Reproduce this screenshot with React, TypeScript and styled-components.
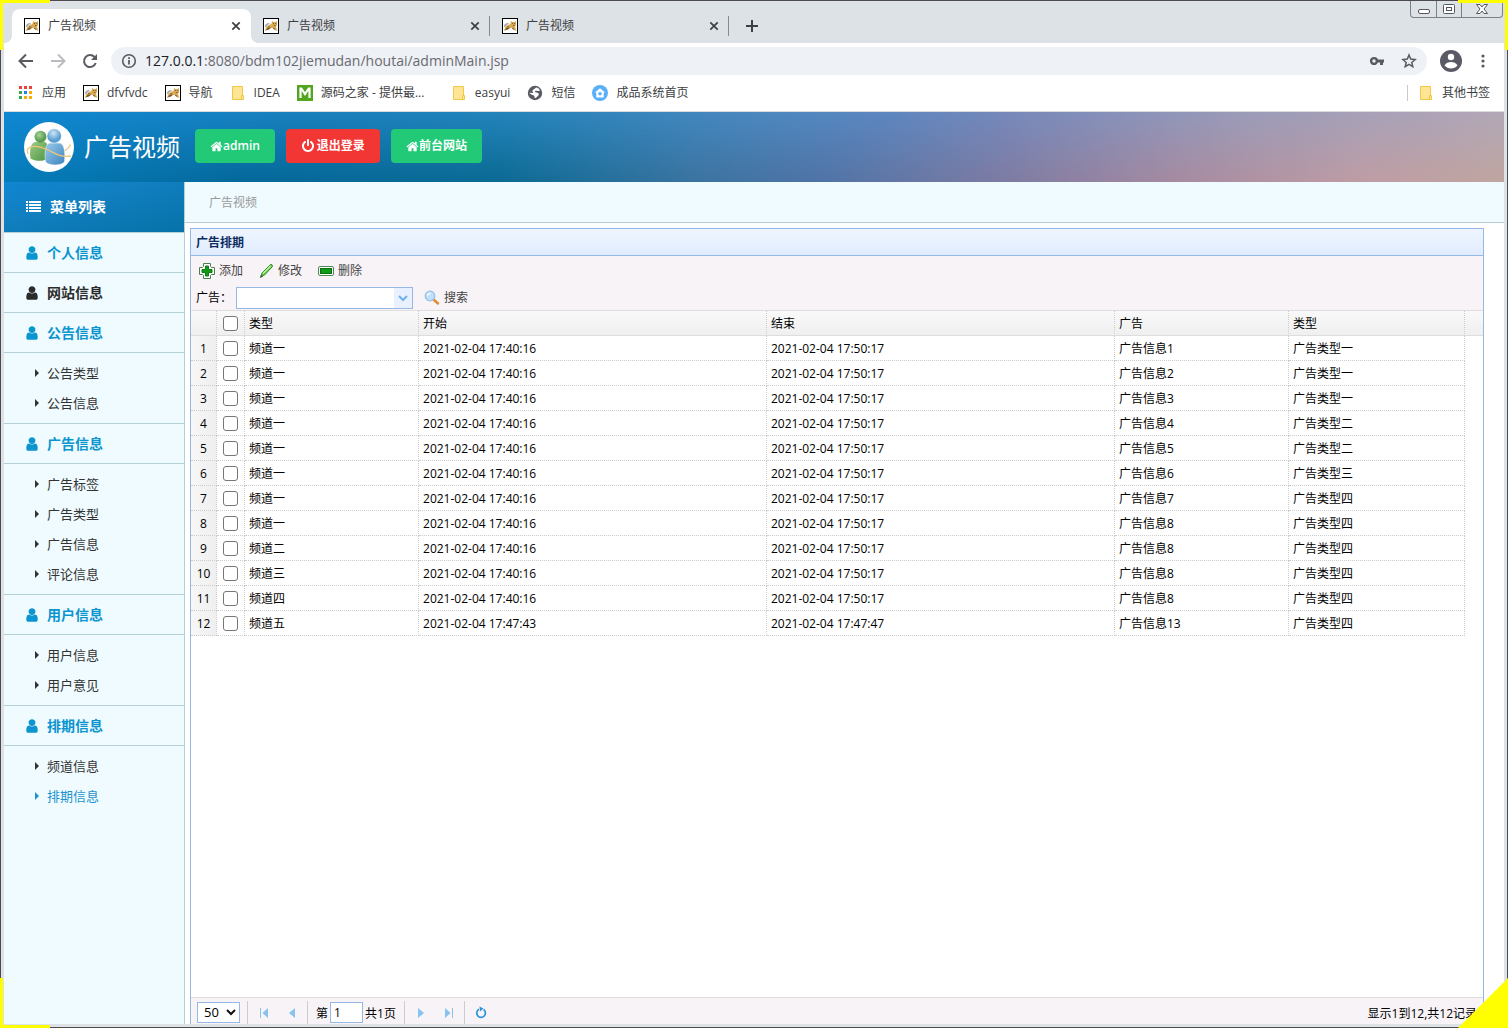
import React from "react";
import styled, { createGlobalStyle } from "styled-components";

const BORDER_BLUE = "#95b8e7";
const LINE = "#b2d0d6";
const SANS = `"Open Sans", "Noto Sans", "Noto Sans CJK SC", sans-serif`;

const GlobalStyle = createGlobalStyle`
  *, *::before, *::after { box-sizing: border-box; }
  body { margin: 0; font: 12px/20px ${SANS}; color: #000; background: #dee1e6; }
  button, input, select { font: inherit; color: inherit; margin: 0; padding: 0; }
  button { border: 0; background: none; cursor: pointer; }
  a { color: inherit; text-decoration: none; }
  ul { list-style: none; margin: 0; padding: 0; }
  svg { display: block; flex: none; }
`;

/* ---------- window ---------- */
const Frame = styled.div`position: relative;`;
const Window = styled.div`
  display: flex;
  flex-direction: column;
  height: 100vh;
  min-height: 860px;
  overflow: hidden;
  border: 1px solid #4d4b4d;
  background: #dde2e6;
`;
const WindowBody = styled.div`
  flex: 1;
  min-height: 0;
  display: flex;
  flex-direction: column;
  margin: 0 3px 3px;
  background: #fff;
`;
const CornerMark = styled.span<{ $v: "top" | "bottom"; $h: "left" | "right" }>`
  position: absolute;
  ${(p) => p.$v}: 0;
  ${(p) => p.$h}: 0;
  width: 50px;
  height: 50px;
  border: 0 solid #ff0;
  border-${(p) => p.$v}-width: 3px;
  border-${(p) => p.$h}-width: 3px;
  pointer-events: none;
`;
const CornerFold = styled.span`
  position: absolute;
  right: 0;
  bottom: 0;
  width: 50px;
  height: 50px;
  background: #ff0;
  clip-path: polygon(100% 0, 100% 100%, 0 100%);
  pointer-events: none;
`;

/* ---------- browser chrome ---------- */
const TabStrip = styled.div`
  display: flex;
  height: 42px;
  flex: none;
  padding-left: 8px;
  background: #dde2e6;
`;
const Tab = styled.div<{ $active?: boolean; $line?: boolean }>`
  position: relative;
  display: flex;
  align-items: center;
  gap: 8px;
  width: 239px;
  margin-top: 8px;
  padding: 0 7px 0 12px;
  border-radius: 8px 8px 0 0;
  color: #3c4043;
  background: ${(p) => (p.$active ? "#fff" : "transparent")};
  &::before, &::after {
    content: "";
    display: ${(p) => (p.$active ? "block" : "none")};
    position: absolute;
    bottom: 0;
    width: 8px;
    height: 8px;
  }
  &::before { left: -8px; background: radial-gradient(circle at 0 0, transparent 8px, #fff 8px); }
  &::after {
    right: -8px;
    background: radial-gradient(circle at 100% 0, transparent 8px, #fff 8px);
    ${(p) => p.$line && "display: block; right: 0; bottom: 7px; width: 1px; height: 20px; background: #87898c;"}
  }
`;
const TabTitle = styled.span`flex: 1; line-height: 22px;`;
const IconButton = styled.button<{ $w?: number }>`
  display: flex;
  align-items: center;
  justify-content: center;
  width: ${(p) => p.$w ?? 16}px;
  height: 16px;
`;
const NewTab = styled(IconButton)`margin: 17px 0 0 15px;`;
const WindowButtons = styled.div`
  display: flex;
  height: 17px;
  margin: 0 1px 0 auto;
  border: 1px solid #7b7f86;
  border-top: 0;
  border-radius: 0 0 4px 4px;
  button + button { border-left: 1px solid #7b7f86; }
`;
const AddressRow = styled.div`
  display: flex;
  align-items: center;
  flex: none;
  height: 36px;
  padding: 0 13px 0 14px;
  gap: 13px;
`;
const NavButtons = styled.div`display: flex; gap: 16px;`;
const Omnibox = styled.div`
  flex: 1;
  display: flex;
  align-items: center;
  gap: 8px;
  height: 28px;
  padding: 0 10px;
  border-radius: 14px;
  background: #eef1f6;
`;
const Url = styled.div`
  flex: 1;
  font-size: 14px;
  color: #6a6a70;
  b { font-weight: 400; color: #202124; }
`;
const OmniIcons = styled.div`display: flex; gap: 16px;`;
const Bookmarks = styled.nav`
  display: flex;
  align-items: center;
  flex: none;
  gap: 17px;
  height: 33px;
  padding: 0 14px 4px;
  border-bottom: 1px solid #dadce0;
  line-height: 22px;
  color: #3c4043;
`;
const Bookmark = styled.a<{ $last?: boolean; $min?: number }>`
  display: flex;
  align-items: center;
  gap: 8px;
  min-width: ${(p) => p.$min ?? 0}px;
  white-space: nowrap;
  ${(p) => p.$last && "margin-left: auto; padding-left: 10px; border-left: 1px solid #c8cacd; height: 16px;"}
`;

/* ---------- site ---------- */
const Header = styled.header`
  position: relative;
  isolation: isolate;
  display: flex;
  align-items: center;
  flex: none;
  height: 70px;
  padding-left: 20px;
  background: linear-gradient(to right, #0f88d4 0%, #1a80bd 20%, #2384bb 33%, #4b88bf 50%, #5b87c0 58%, #7789bb 67%, #9a9bb9 82%, #b0a5b8 97%, #b2a8b6 100%);
  &::before {
    content: "";
    position: absolute;
    inset: 0;
    z-index: -1;
    background: linear-gradient(to right, #057cb8 0%, #04689a 16%, #0b6a93 33%, #3b73a0 46%, #5273a6 55%, #7f7ba2 67%, #a68aa0 78%, #bf9da4 91%, #bfa59f 100%);
    mask-image: linear-gradient(to bottom, transparent, #000);
  }
`;
const SiteTitle = styled.h1`
  margin: 0 15px 0 10px;
  font-size: 24px;
  line-height: 36px;
  font-weight: 400;
  color: #fff;
`;
const HeaderActions = styled.div`
  display: flex;
  gap: 11px;
  padding-bottom: 2px;
`;
const HeaderButton = styled.button<{ $red?: boolean }>`
  display: flex;
  align-items: center;
  gap: ${(p) => (p.$red ? 2 : 0)}px;
  height: 34px;
  padding: 0 15px;
  border-radius: 4px;
  font-weight: 600;
  color: #fff;
  background: ${(p) => (p.$red ? "#f13633" : "#22ca77")};
`;
const Columns = styled.div`flex: 1; min-height: 0; display: flex;`;
const Sidebar = styled.aside`
  flex: none;
  width: 181px;
  border-right: 1px solid ${LINE};
  background: #effbff;
`;
const MenuTitle = styled.h2`
  display: flex;
  align-items: center;
  gap: 9px;
  height: 51px;
  margin: 0;
  padding-left: 22px;
  border-bottom: 1px solid ${LINE};
  font-size: 14px;
  color: #fff;
  background: linear-gradient(165deg, #0f86d2 0%, #117fc0 40%, #0672a8 100%);
`;
const MenuItem = styled.a<{ $dark?: boolean }>`
  display: flex;
  align-items: center;
  gap: 7px;
  height: 40px;
  padding-left: 20px;
  border-bottom: 1px solid ${LINE};
  font-size: 14px;
  font-weight: 700;
  color: ${(p) => (p.$dark ? "#2b2b2b" : "#0b95cf")};
`;
const SubMenu = styled.ul`
  padding: 5px 0;
  border-bottom: 1px solid ${LINE};
  &.last { border-bottom: 0; }
`;
const SubItem = styled.a<{ $on?: boolean }>`
  display: flex;
  align-items: center;
  gap: 8px;
  height: 30px;
  padding-left: 30px;
  font-size: 13px;
  color: ${(p) => (p.$on ? "#1f93cd" : "#333")};
`;
const Main = styled.main`flex: 1; min-width: 0; display: flex; flex-direction: column;`;
const Crumb = styled.div`
  flex: none;
  height: 41px;
  padding-left: 24px;
  border-bottom: 1px solid ${LINE};
  line-height: 42px;
  color: #999;
  background: #effbff;
`;

/* ---------- grid panel ---------- */
const Panel = styled.section`
  flex: 1;
  min-height: 0;
  display: flex;
  flex-direction: column;
  margin: 5px 20px 0 5px;
  border: 1px solid ${BORDER_BLUE};
  border-bottom: 0;
`;
const PanelTitle = styled.h3`
  height: 27px;
  margin: 0;
  padding-left: 5px;
  border-bottom: 1px solid ${BORDER_BLUE};
  font-size: 12px;
  line-height: 28px;
  color: #0e2d5f;
  background: linear-gradient(#eff5ff, #e0ecff);
`;
const Tools = styled.div`
  height: 55px;
  padding: 1px 5px 0;
  border-bottom: 1px solid #ddd;
  background: #f8f3f7;
`;
const ToolRow = styled.div<{ $gap: number }>`
  display: flex;
  align-items: center;
  gap: ${(p) => p.$gap}px;
  height: 27px;
`;
const ToolButton = styled.button`
  display: flex;
  align-items: center;
  gap: 4px;
  height: 24px;
  padding: 0 3px;
  color: #444;
`;
const Combo = styled.span`
  position: relative;
  width: 177px;
  height: 22px;
  margin-right: 4px;
  border: 1px solid ${BORDER_BLUE};
  background: #fff;
  select {
    width: 100%;
    height: 100%;
    padding: 0 22px 0 4px;
    border: 0;
    outline: 0;
    appearance: none;
    background: linear-gradient(#e9f0ff, #e9f0ff) right / 18px 100% no-repeat;
  }
  svg { position: absolute; right: 4px; top: 7px; pointer-events: none; }
`;
const Scroll = styled.div`flex: 1; min-height: 0; overflow: hidden;`;
const Grid = styled.table`
  width: 100%;
  table-layout: fixed;
  border-collapse: separate;
  border-spacing: 0;
  th, td {
    height: 25px;
    padding: 2px 4px 0;
    border-right: 1px dotted #ccc;
    border-bottom: 1px dotted #ccc;
    font-weight: 400;
    line-height: 22px;
    text-align: left;
    white-space: nowrap;
    overflow: hidden;
  }
  thead tr { background: linear-gradient(#f9f9f9, #efefef); }
  thead th { border-bottom: 1px solid #ddd; }
  tbody th {
    padding: 2px 0 0;
    text-align: center;
    background: linear-gradient(to right, #f7f7f7, #efefef);
  }
  th:last-child, td:last-child { border-right: 0; padding: 0; }
  td:last-child { border-bottom: 0; }
`;
const Check = styled.input`
  display: block;
  appearance: none;
  width: 15px;
  height: 15px;
  margin: 0 auto;
  border: 1px solid #767676;
  border-radius: 3px;
  background: #fff;
  &:checked { background: #1a73e8; }
`;
const CheckTh = styled.th`&&& { padding: 0; }`;
const CheckTd = styled.td`&&& { padding: 0; }`;
const Pager = styled.footer`
  flex: none;
  display: flex;
  height: 27px;
  padding: 4px 6px 0;
  border-top: 1px solid #ddd;
  line-height: 24px;
  background: #f8f3f7;
`;
const PageSize = styled.span`
  position: relative;
  width: 43px;
  height: 21px;
  margin-right: 6px;
  select {
    display: block;
    width: 100%;
    height: 100%;
    padding-left: 6px;
    border: 1px solid ${BORDER_BLUE};
    appearance: none;
    font-size: 13px;
    line-height: 19px;
    background: #fff;
  }
  svg { position: absolute; right: 4px; top: 7px; pointer-events: none; }
`;
const Sep = styled.span`
  width: 1px;
  height: 23px;
  margin: -1px 2px 0 1px;
  background: #ccc;
`;
const PageButton = styled(IconButton)`height: 22px;`;
const PageField = styled.label`
  display: flex;
  gap: 2px;
  padding: 0 7px 0 6px;
  input {
    width: 33px;
    height: 21px;
    padding: 0 3px;
    border: 1px solid ${BORDER_BLUE};
    background: #fff;
  }
`;
const PageInfo = styled.span`margin-left: auto;`;

/* ---------- icons ---------- */
const FA = {
  user: "M1536 1399q0 109-62.5 187t-150.5 78h-854q-88 0-150.5-78t-62.5-187q0-85 8.5-160.5t31.5-152 58.5-131 94-89 134.5-34.5q131 128 313 128t313-128q76 0 134.5 34.5t94 89 58.5 131 31.5 152 8.5 160.5zm-256-887q0 159-112.5 271.5t-271.5 112.5-271.5-112.5-112.5-271.5 112.5-271.5 271.5-112.5 271.5 112.5 112.5 271.5z",
  home: "M1472 992v480q0 26-19 45t-45 19h-384v-384h-256v384h-384q-26 0-45-19t-19-45v-480q0-1 .5-3t.5-3l575-474 575 474q1 2 1 6zm223-69l-62 74q-8 9-21 11h-3q-13 0-21-7l-692-577-692 577q-12 8-24 7-13-2-21-11l-62-74q-8-10-7-23.5t11-21.5l719-599q32-26 76-26t76 26l244 204v-195q0-14 9-23t23-9h192q14 0 23 9t9 23v408l219 182q10 8 11 21.5t-7 23.5z",
  power: "M1664 896q0 156-61 298t-164 245-245 164-298 61-298-61-245-164-164-245-61-298q0-182 80.5-343t226.5-270q43-32 95.5-25t83.5 50q32 42 24.5 94.5t-49.5 84.5q-98 74-151.5 181t-53.5 228q0 104 40.5 198.5t109.5 163.5 163.5 109.5 198.5 40.5 198.5-40.5 163.5-109.5 109.5-163.5 40.5-198.5q0-121-53.5-228t-151.5-181q-42-32-49.5-84.5t24.5-94.5q31-43 84-50t95 25q146 109 226.5 270t80.5 343zm-640-768v640q0 52-38 90t-90 38-90-38-38-90v-640q0-52 38-90t90-38 90 38 38 90z",
};
const Glyph = ({ name, size }: { name: keyof typeof FA; size: number }) => (
  <svg width={size} height={size} viewBox="0 0 1792 1792" fill="currentColor"><path d={FA[name]} /></svg>
);
const TomcatIcon = () => (
  <svg width="16" height="16" viewBox="0 0 16 16">
    <rect x=".5" y=".5" width="15" height="15" fill="#fff" stroke="#000" />
    <path d="M2 13l1-3.500 3-2.500 2.500-1 .5-3 1.500 1h2l1.500-1v4l-1 2 1.500 4-2-1-2.500-2.500-3 1-2 .5z" fill="#d9a952" />
    <path d="M1.800 9l.7-2.500 2.500-1.500 2.500.8-2.500 1-1.800 2.200z" fill="#a5a5a5" />
    <path d="M2.500 12.500l2.500-3 2.500.5-1.500 1.500zM9.500 9.500l1.800.5 1.700 2.500-2.500-1.500z" fill="#7a5726" />
    <path d="M5 8.500l2.500.8M10 5.500h1M12.200 5.500h1M11 7.500h1.500" stroke="#7a5726" strokeWidth=".9" />
  </svg>
);
const FolderIcon = () => (
  <svg width="16" height="16" viewBox="0 0 16 16">
    <path d="M2.500 1.500h10v13h-10z" fill="#ffe594" stroke="#efc84a" />
    <path d="M11.500 10.500h2v4h-2z" fill="#ffe594" stroke="#efc84a" />
  </svg>
);
const AppsIcon = () => {
  const c = ["#ea4335", "#ea4335", "#ea4335", "#34a853", "#1a86ee", "#fbac04", "#34a853", "#fbac04", "#fbac04"];
  return (
    <svg width="16" height="16" viewBox="0 0 16 16">
      {c.map((f, i) => <rect key={i} x={1 + (i % 3) * 5} y={1 + Math.floor(i / 3) * 5} width="3" height="3" fill={f} />)}
    </svg>
  );
};
const MIcon = () => (
  <svg width="16" height="16" viewBox="0 0 16 16">
    <rect width="16" height="16" fill="#53a51f" />
    <path d="M3.500 13V3.500h.8L8 9l3.700-5.500h.8V13" fill="none" stroke="#fff" strokeWidth="2.200" />
  </svg>
);
const GlobeIcon = () => (
  <svg width="16" height="16" viewBox="0 0 16 16">
    <circle cx="8" cy="8" r="7.200" fill="#5a5b62" />
    <path d="M9 2.600c1.800.2 3.200 1.200 4 2.700-1 .9-2.300.6-3.300.4-1.200-.2-2 .3-1.700 1 .4.800 2.200.6 3.200 1.300 1 .9.600 2.400-.6 3.300-.8.6-1.300 1.400-2.600 2 -.6-.8-.2-1.700-.8-2.400C6.400 10 4.800 10.300 4 9.300L2.400 8c1.500-.4 2.800.2 3.900.1C6 7 5 6.800 5.500 5.600 6 4.500 7.800 4.300 9 2.600z" fill="#fff" />
  </svg>
);
const HouseBadge = () => (
  <svg width="16" height="16" viewBox="0 0 16 16">
    <circle cx="8" cy="8" r="8" fill="#5ab0f8" />
    <path d="M8 3.200l5 4.300h-1.300v5H4.300v-5H3z" fill="#fff" />
    <circle cx="8" cy="8.800" r="1.800" fill="#5ab0f8" />
  </svg>
);
const CloseIcon = () => (
  <svg width="16" height="16" viewBox="0 0 16 16" stroke="#3c4043" strokeWidth="1.700"><path d="M4.300 4.300l7.400 7.400M11.700 4.300l-7.400 7.400" /></svg>
);
const PlusIcon = () => (
  <svg width="16" height="16" viewBox="0 0 16 16" stroke="#3c4043" strokeWidth="2"><path d="M8 2v12M2 8h12" /></svg>
);
const ArrowIcon = ({ flip, color }: { flip?: boolean; color: string }) => (
  <svg width="16" height="16" viewBox="0 0 16 16" fill="none" stroke={color} strokeWidth="2">
    <path d={flip ? "M1 8h13M8 1.500L14.500 8 8 14.500" : "M15 8H2M8 1.500L1.500 8 8 14.500"} />
  </svg>
);
const ReloadIcon = () => (
  <svg width="16" height="16" viewBox="0 0 16 16">
    <path d="M13.700 10A6 6 0 1 1 12.500 4" fill="none" stroke="#5a5a62" strokeWidth="2" />
    <path d="M15 1v6H9z" fill="#5a5a62" />
  </svg>
);
const InfoIcon = () => (
  <svg width="16" height="16" viewBox="0 0 16 16" fill="none" stroke="#5a5a62">
    <circle cx="8" cy="8" r="6.300" strokeWidth="1.600" /><path d="M8 7v4.500M8 4.200v1.800" strokeWidth="1.800" />
  </svg>
);
const KeyIcon = () => (
  <svg width="16" height="16" viewBox="0 0 16 16">
    <circle cx="5" cy="8" r="2.900" fill="none" stroke="#5a5a62" strokeWidth="2.400" />
    <path d="M8 6.500h7v3h-1V12h-3V9.500H8z" fill="#5a5a62" />
  </svg>
);
const StarIcon = () => (
  <svg width="16" height="16" viewBox="0 0 16 16">
    <path d="M8 2l1.700 4.100 4.400.4-3.300 2.900 1 4.300L8 11.400l-3.800 2.300 1-4.300L1.900 6.500l4.400-.4z" fill="none" stroke="#5a5a62" strokeWidth="1.500" />
  </svg>
);
const PersonIcon = () => (
  <svg width="22" height="22" viewBox="0 0 22 22">
    <circle cx="11" cy="11" r="11" fill="#5a5a66" />
    <circle cx="11" cy="7" r="3.200" fill="#fff" />
    <path d="M4.500 15.500c1-2.500 4-3.500 6.500-3.500s5.500 1 6.500 3.500c-1.500 2-4 3-6.500 3s-5-1-6.500-3z" fill="#fff" />
  </svg>
);
const DotsIcon = () => (
  <svg width="16" height="16" viewBox="0 0 16 16" fill="#5a5a62">
    <circle cx="8" cy="3" r="1.600" /><circle cx="8" cy="8" r="1.600" /><circle cx="8" cy="13" r="1.600" />
  </svg>
);
const MinIcon = () => (
  <svg width="14" height="14" viewBox="0 0 14 14"><rect x="1.500" y="7.500" width="11" height="4" rx="1.500" fill="#fff" stroke="#54565c" /></svg>
);
const MaxIcon = () => (
  <svg width="14" height="14" viewBox="0 0 14 14" fill="#fff" stroke="#54565c">
    <rect x="1.500" y="2.500" width="11" height="9" rx="1" /><rect x="4.500" y="5.500" width="5" height="3" />
  </svg>
);
const ShutIcon = () => (
  <svg width="14" height="14" viewBox="0 0 14 14" fill="#fff" stroke="#54565c">
    <path d="M1.500 2.500h3.500l2 2.500 2-2.500h3.500L9 7l3.500 4.500H9L7 9l-2 2.500H1.500L5 7z" />
  </svg>
);
const UsersLogo = () => (
  <svg width="50" height="50" viewBox="0 0 50 50" role="img" aria-label="logo">
    <defs>
      <radialGradient id="gh" cx=".4" cy=".35"><stop offset="0" stopColor="#a9d39a" /><stop offset="1" stopColor="#5b9d50" /></radialGradient>
      <linearGradient id="gb" x1="0" x2="1" y2="1"><stop offset="0" stopColor="#9ccb88" /><stop offset="1" stopColor="#4b9440" /></linearGradient>
      <radialGradient id="bh" cx=".45" cy=".3"><stop offset="0" stopColor="#cfe6f7" /><stop offset="1" stopColor="#5c9fd2" /></radialGradient>
      <linearGradient id="bb" x1="0" x2="1" y2="1"><stop offset="0" stopColor="#9ccaeb" /><stop offset="1" stopColor="#3c84c0" /></linearGradient>
    </defs>
    <circle cx="25" cy="25" r="25" fill="#fff" />
    <path d="M6.500 36.500C5 27 7 20 12 20h8c4 0 5 6 4 17-5 2.500-13 2.500-17.500-.5z" fill="url(#gb)" />
    <circle cx="16.500" cy="14.800" r="6" fill="url(#gh)" />
    <path d="M21.500 40C20 29 22 21 26 21h9c5 0 6.500 8 5.500 19-4 4-15 4-19 0z" fill="url(#bb)" stroke="#fff" strokeWidth=".5" />
    <circle cx="30.200" cy="14" r="7.200" fill="url(#bh)" stroke="#fff" strokeWidth=".4" />
    <path d="M4 32C0 23 13 23 22 27c9 4 14 9 25 7M41 28.500c3-1.500 4.500-4 5.500-6" fill="none" stroke="#f2c572" strokeWidth="1.300" />
  </svg>
);
const ListIcon = () => (
  <svg width="15" height="12" viewBox="0 0 15 12" fill="#fff">
    {[0, 3, 6, 9].map((y) => <path key={y} d={`M0 ${y}h2v2H0zM3 ${y}h12v2H3z`} />)}
  </svg>
);
const Caret = () => <svg width="5" height="8" viewBox="0 0 5 8" fill="currentColor"><path d="M1 0l4 4-4 4z" /></svg>;
const AddIcon = () => (
  <svg width="16" height="16" viewBox="0 0 16 16">
    <path d="M4.500 .5h7v3l1 1h3v7h-3l-1 1v3h-7v-3l-1-1h-3v-7h3l1-1z" fill="#fff" stroke="#4a7f52" />
    <path d="M6.500 3h3v3.500H13v3H9.500V13h-3V9.500H3v-3h3.500z" fill="#119a16" stroke="#0b7a12" />
  </svg>
);
const PencilIcon = () => (
  <svg width="15" height="16" viewBox="0 0 15 16">
    <path d="M2 13.500l1-3.500L11.500 1.500q2-.5 2 2L5.500 12z" fill="#62c93c" stroke="#2c8a25" />
    <path d="M4 10.500L11.800 2.800" stroke="#c9f5b5" strokeWidth="1.200" />
    <path d="M.8 15l1.200-3 2 1.800z" fill="#374a34" />
  </svg>
);
const RemoveIcon = () => (
  <svg width="16" height="16" viewBox="0 0 16 16">
    <rect x=".5" y="3.500" width="15" height="9" rx="1.500" fill="#fff" stroke="#4c8a55" />
    <rect x="2.500" y="5.500" width="11" height="5" fill="#119a16" stroke="#0b6d14" />
  </svg>
);
const SearchIcon = () => (
  <svg width="16" height="16" viewBox="0 0 16 16">
    <path d="M9.500 9.500l4.500 4" stroke="#dd8a32" strokeWidth="2.500" strokeLinecap="round" />
    <circle cx="6" cy="6" r="4.800" fill="#bfe0fb" stroke="#9dbfe6" strokeWidth="1.300" />
    <path d="M3.500 5.500Q4 3.500 6.500 3.200" stroke="#fff" fill="none" strokeWidth="1.500" />
  </svg>
);
const Chevron = ({ color }: { color: string }) => (
  <svg width="10" height="7" viewBox="0 0 10 7" fill="none" stroke={color} strokeWidth="2"><path d="M1 1l4 4 4-4" /></svg>
);
const PAGE_PATHS = {
  first: "M4 3h1v10H4zM12 3v10L6.500 8z",
  prev: "M11 3v10L5 8z",
  next: "M5 3v10l6-5z",
  last: "M11 3h1v10h-1zM4 3v10l5.500-5z",
};
const PageIcon = ({ name }: { name: keyof typeof PAGE_PATHS }) => (
  <svg width="16" height="16" viewBox="0 0 16 16" fill="#86c3ef"><path d={PAGE_PATHS[name]} /></svg>
);
const RefreshIcon = () => (
  <svg width="16" height="16" viewBox="0 0 16 16">
    <path d="M10.500 4.500a4.300 4.300 0 1 1-4.500-.2" fill="none" stroke="#2b95dd" strokeWidth="1.700" />
    <path d="M6.500 1.500l4 2-3.500 3z" fill="#2b95dd" />
  </svg>
);

/* ---------- data ---------- */
const tabs = [{ active: true }, { line: true }, { line: true }];
const bookmarks: { icon: () => React.JSX.Element; label: string; min?: number }[] = [
  { icon: AppsIcon, label: "应用" },
  { icon: TomcatIcon, label: "dfvfvdc" },
  { icon: TomcatIcon, label: "导航" },
  { icon: FolderIcon, label: "IDEA" },
  { icon: MIcon, label: "源码之家 - 提供最...", min: 137 },
  { icon: FolderIcon, label: "easyui" },
  { icon: GlobeIcon, label: "短信" },
  { icon: HouseBadge, label: "成品系统首页" },
];
const menu: { title: string; dark?: boolean; items?: string[] }[] = [
  { title: "个人信息" },
  { title: "网站信息", dark: true },
  { title: "公告信息", items: ["公告类型", "公告信息"] },
  { title: "广告信息", items: ["广告标签", "广告类型", "广告信息", "评论信息"] },
  { title: "用户信息", items: ["用户信息", "用户意见"] },
  { title: "排期信息", items: ["频道信息", "排期信息"] },
];
const T0 = "2021-02-04 17:40:16";
const T1 = "2021-02-04 17:50:17";
const rows: string[][] = [
  ["频道一", T0, T1, "广告信息1", "广告类型一"],
  ["频道一", T0, T1, "广告信息2", "广告类型一"],
  ["频道一", T0, T1, "广告信息3", "广告类型一"],
  ["频道一", T0, T1, "广告信息4", "广告类型二"],
  ["频道一", T0, T1, "广告信息5", "广告类型二"],
  ["频道一", T0, T1, "广告信息6", "广告类型三"],
  ["频道一", T0, T1, "广告信息7", "广告类型四"],
  ["频道一", T0, T1, "广告信息8", "广告类型四"],
  ["频道二", T0, T1, "广告信息8", "广告类型四"],
  ["频道三", T0, T1, "广告信息8", "广告类型四"],
  ["频道四", T0, T1, "广告信息8", "广告类型四"],
  ["频道五", "2021-02-04 17:47:43", "2021-02-04 17:47:47", "广告信息13", "广告类型四"],
];
const Col = styled.col<{ $w?: string }>`width: ${(p) => p.$w ?? "auto"};`;

export default function App() {
  return (
    <>
      <GlobalStyle />
      <Frame>
        <Window>
          <WindowBody>
            <TabStrip>
              {tabs.map((t, i) => (
                <Tab key={i} $active={t.active} $line={t.line}>
                  <TomcatIcon />
                  <TabTitle>广告视频</TabTitle>
                  <IconButton aria-label="关闭标签"><CloseIcon /></IconButton>
                </Tab>
              ))}
              <NewTab aria-label="新标签"><PlusIcon /></NewTab>
              <WindowButtons>
                <IconButton $w={25} aria-label="最小化"><MinIcon /></IconButton>
                <IconButton $w={25} aria-label="最大化"><MaxIcon /></IconButton>
                <IconButton $w={41} aria-label="关闭"><ShutIcon /></IconButton>
              </WindowButtons>
            </TabStrip>
            <AddressRow>
              <NavButtons>
                <IconButton aria-label="后退"><ArrowIcon color="#5a5a62" /></IconButton>
                <IconButton aria-label="前进"><ArrowIcon flip color="#bcbcc0" /></IconButton>
                <IconButton aria-label="刷新"><ReloadIcon /></IconButton>
              </NavButtons>
              <Omnibox>
                <InfoIcon />
                <Url><b>127.0.0.1</b>:8080/bdm102jiemudan/houtai/adminMain.jsp</Url>
                <OmniIcons><KeyIcon /><StarIcon /></OmniIcons>
              </Omnibox>
              <PersonIcon />
              <IconButton aria-label="菜单"><DotsIcon /></IconButton>
            </AddressRow>
            <Bookmarks>
              {bookmarks.map(({ icon: Icon, label, min }) => (
                <Bookmark key={label} href="#" $min={min}><Icon />{label}</Bookmark>
              ))}
              <Bookmark href="#" $last><FolderIcon />其他书签</Bookmark>
            </Bookmarks>

            <Header>
              <UsersLogo />
              <SiteTitle>广告视频</SiteTitle>
              <HeaderActions>
                <HeaderButton><Glyph name="home" size={13} />admin</HeaderButton>
                <HeaderButton $red><Glyph name="power" size={14} />退出登录</HeaderButton>
                <HeaderButton><Glyph name="home" size={13} />前台网站</HeaderButton>
              </HeaderActions>
            </Header>

            <Columns>
              <Sidebar>
                <MenuTitle><ListIcon />菜单列表</MenuTitle>
                {menu.map((m, i) => (
                  <React.Fragment key={m.title}>
                    <MenuItem href="#" $dark={m.dark}><Glyph name="user" size={16} />{m.title}</MenuItem>
                    {m.items && (
                      <SubMenu className={i === menu.length - 1 ? "last" : undefined}>
                        {m.items.map((s) => (
                          <li key={s}>
                            <SubItem href="#" $on={m.title === "排期信息" && s === "排期信息"}><Caret />{s}</SubItem>
                          </li>
                        ))}
                      </SubMenu>
                    )}
                  </React.Fragment>
                ))}
              </Sidebar>

              <Main>
                <Crumb>广告视频</Crumb>
                <Panel>
                  <PanelTitle>广告排期</PanelTitle>
                  <Tools>
                    <ToolRow $gap={10}>
                      <ToolButton><AddIcon />添加</ToolButton>
                      <ToolButton><PencilIcon />修改</ToolButton>
                      <ToolButton><RemoveIcon />删除</ToolButton>
                    </ToolRow>
                    <ToolRow $gap={4}>
                      <label htmlFor="ad">广告：</label>
                      <Combo>
                        <select id="ad"><option /></select>
                        <Chevron color="#6fb1ea" />
                      </Combo>
                      <ToolButton><SearchIcon />搜索</ToolButton>
                    </ToolRow>
                  </Tools>
                  <Scroll>
                    <Grid>
                      <colgroup>
                        <Col $w="26px" /><Col $w="28px" />
                        <Col $w="13.47%" /><Col $w="26.93%" /><Col $w="26.93%" /><Col $w="13.47%" /><Col />
                        <Col $w="18px" />
                      </colgroup>
                      <thead>
                        <tr>
                          <th />
                          <CheckTh><Check type="checkbox" aria-label="全选" /></CheckTh>
                          {["类型", "开始", "结束", "广告", "类型"].map((h, i) => <th key={i}>{h}</th>)}
                          <th />
                        </tr>
                      </thead>
                      <tbody>
                        {rows.map((r, i) => (
                          <tr key={i}>
                            <th>{i + 1}</th>
                            <CheckTd><Check type="checkbox" aria-label={`选择第${i + 1}行`} /></CheckTd>
                            {r.map((c, j) => <td key={j}>{c}</td>)}
                            <td />
                          </tr>
                        ))}
                      </tbody>
                    </Grid>
                  </Scroll>
                  <Pager>
                    <PageSize>
                      <select aria-label="每页条数"><option>50</option></select>
                      <Chevron color="#111" />
                    </PageSize>
                    <Sep />
                    <PageButton $w={28} aria-label="首页"><PageIcon name="first" /></PageButton>
                    <PageButton $w={28} aria-label="上一页"><PageIcon name="prev" /></PageButton>
                    <Sep />
                    <PageField>第<input defaultValue="1" />共1页</PageField>
                    <Sep />
                    <PageButton $w={28} aria-label="下一页"><PageIcon name="next" /></PageButton>
                    <PageButton $w={28} aria-label="末页"><PageIcon name="last" /></PageButton>
                    <Sep />
                    <PageButton $w={28} aria-label="重新载入"><RefreshIcon /></PageButton>
                    <PageInfo>显示1到12,共12记录</PageInfo>
                  </Pager>
                </Panel>
              </Main>
            </Columns>
          </WindowBody>
        </Window>
        <CornerMark $v="top" $h="left" />
        <CornerMark $v="top" $h="right" />
        <CornerMark $v="bottom" $h="left" />
        <CornerFold />
      </Frame>
    </>
  );
}
